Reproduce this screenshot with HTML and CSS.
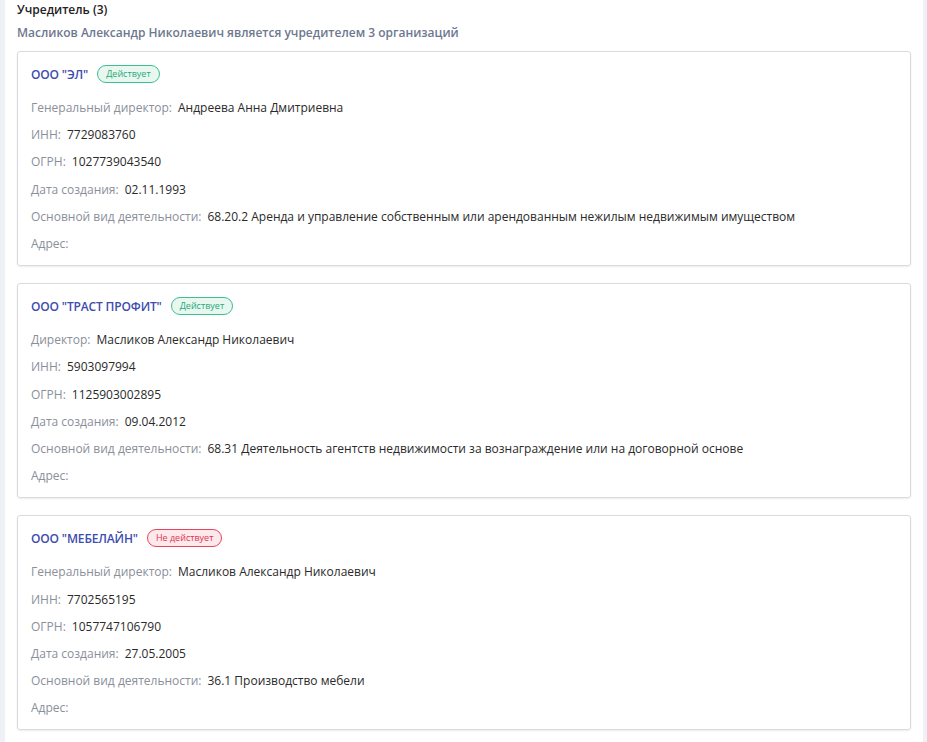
FILE: index.html
```html
<!DOCTYPE html>
<html lang="ru">
<head>
<meta charset="utf-8">
<link rel="stylesheet" href="styles.css">
</head>
<body>
<div class="panel">
  <div class="title">Учредитель (3)</div>
  <div class="subtitle">Масликов Александр Николаевич является учредителем 3 организаций</div>

  <div class="card">
    <div class="head"><span class="name">ООО "ЭЛ"</span><span class="badge ok">Действует</span></div>
    <div class="row"><span class="label">Генеральный директор:</span><span class="value">Андреева Анна Дмитриевна</span></div>
    <div class="row"><span class="label">ИНН:</span><span class="value">7729083760</span></div>
    <div class="row"><span class="label">ОГРН:</span><span class="value">1027739043540</span></div>
    <div class="row"><span class="label">Дата создания:</span><span class="value">02.11.1993</span></div>
    <div class="row"><span class="label">Основной вид деятельности:</span><span class="value">68.20.2 Аренда и управление собственным или арендованным нежилым недвижимым имуществом</span></div>
    <div class="row"><span class="label">Адрес:</span><span class="value"></span></div>
  </div>

  <div class="card">
    <div class="head"><span class="name">ООО "ТРАСТ ПРОФИТ"</span><span class="badge ok">Действует</span></div>
    <div class="row"><span class="label">Директор:</span><span class="value">Масликов Александр Николаевич</span></div>
    <div class="row"><span class="label">ИНН:</span><span class="value">5903097994</span></div>
    <div class="row"><span class="label">ОГРН:</span><span class="value">1125903002895</span></div>
    <div class="row"><span class="label">Дата создания:</span><span class="value">09.04.2012</span></div>
    <div class="row"><span class="label">Основной вид деятельности:</span><span class="value">68.31 Деятельность агентств недвижимости за вознаграждение или на договорной основе</span></div>
    <div class="row"><span class="label">Адрес:</span><span class="value"></span></div>
  </div>

  <div class="card">
    <div class="head"><span class="name">ООО "МЕБЕЛАЙН"</span><span class="badge bad">Не действует</span></div>
    <div class="row"><span class="label">Генеральный директор:</span><span class="value">Масликов Александр Николаевич</span></div>
    <div class="row"><span class="label">ИНН:</span><span class="value">7702565195</span></div>
    <div class="row"><span class="label">ОГРН:</span><span class="value">1057747106790</span></div>
    <div class="row"><span class="label">Дата создания:</span><span class="value">27.05.2005</span></div>
    <div class="row"><span class="label">Основной вид деятельности:</span><span class="value">36.1 Производство мебели</span></div>
    <div class="row"><span class="label">Адрес:</span><span class="value"></span></div>
  </div>
</div>
</body>
</html>
```

FILE: styles.css
```css
html, body {
  margin: 0;
  padding: 0;
  background: #f0f1f7;
  font-family: "Open Sans", "Noto Sans", sans-serif;
}
.panel {
  margin-left: 5px;
  width: 918px;
  min-height: 742px;
  background: #ffffff;
  box-sizing: border-box;
  padding: 1px 12px 10px 12px;
}
.title {
  font-size: 12px;
  font-weight: 600;
  color: #222;
  line-height: 18px;
}
.subtitle {
  margin-top: 5px;
  font-size: 12px;
  font-weight: 600;
  color: #6e7790;
  line-height: 18px;
}
.card {
  margin-top: 9px;
  margin-bottom: 17px;
  border: 1px solid #dadada;
  border-radius: 3px;
  box-shadow: 0 1px 2px rgba(0,0,0,0.08);
  padding: 12px 13px 8px 13px;
}
.card + .card { margin-top: 0; }
.head {
  display: flex;
  align-items: center;
  height: 20px;
  margin-bottom: 10px;
}
.name {
  font-size: 12px;
  font-weight: 600;
  letter-spacing: -0.15px;
  color: #3d4cae;
}
.badge {
  margin-left: 9px;
  font-size: 9px;
  line-height: 16px;
  padding: 0 8px;
  border-radius: 9px;
  border: 1px solid;
}
.badge.ok {
  color: #26a877;
  border-color: #3cc08f;
  background: #e8f8f1;
}
.badge.bad {
  color: #e0334b;
  border-color: #e4475d;
  background: #fde8ec;
}
.row {
  display: flex;
  align-items: center;
  height: 27.2px;
  font-size: 12px;
}
.label {
  color: #8a8f99;
  margin-right: 6px;
}
.value {
  color: #2a2a2a;
}
```
